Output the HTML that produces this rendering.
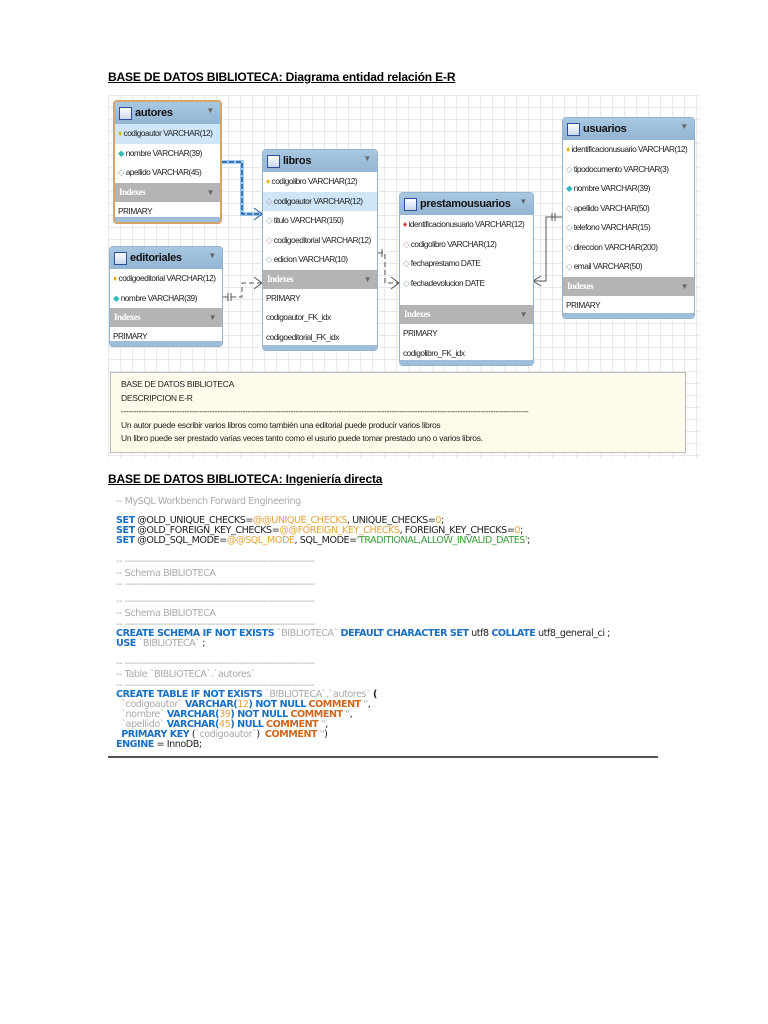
<!DOCTYPE html>
<html><head><meta charset="utf-8"><style>
*{margin:0;padding:0;box-sizing:border-box}
body{width:768px;height:1024px;background:#fff;position:relative;overflow:hidden;font-family:"Liberation Sans",sans-serif}
.h{position:absolute;left:108px;font:bold 12px "Liberation Sans",sans-serif;letter-spacing:-0.15px;text-decoration:underline;color:#000}
.grid{position:absolute;left:108px;top:95px;width:592px;height:363px;background-color:#fff;
background-image:linear-gradient(#e8e8e8 1px,transparent 1px),linear-gradient(90deg,#e8e8e8 1px,transparent 1px);background-size:12px 12px}
.t{position:absolute;background:#fff;border:1px solid #93b3cf;border-radius:4px;overflow:hidden;font-size:8.3px;color:#222;letter-spacing:-0.5px}
.t .hd{height:22px;background:linear-gradient(#a9c7e0,#93b6d4);font:bold 11px "Liberation Sans",sans-serif;letter-spacing:-0.3px;color:#111;padding:5px 0 0 20px;position:relative}
.t .hd:before{content:"";position:absolute;left:4px;top:5px;width:11px;height:11px;border:1px solid #2c4fa0;background:linear-gradient(#fff,#c9d7ee)}
.t .hd:after{content:"▼";position:absolute;right:6px;top:4px;font-size:8px;color:#666}
.r{height:19.5px;line-height:19.5px;padding-left:3px;white-space:nowrap}
.r.sel{background:#cfe6f8}
.ix{height:19px;line-height:19px;background:#b4b4b4;color:#fff;font-weight:bold;padding-left:4px;position:relative;font-family:"Liberation Serif",serif;font-size:9px}
.ix:after{content:"▼";position:absolute;right:6px;font-size:8px;color:#666}
.ft{position:absolute;left:0;right:0;bottom:0;height:5px;background:#9dbdd8}
.k{color:#e0b800}.kr{color:#c33}.d{color:#8aa}.dc{color:#3bb}.dr{color:#c99}
.note{position:absolute;left:110px;top:372px;width:576px;height:81px;background:#fffbea;border:1px solid #bbb;font-size:8.5px;letter-spacing:-0.3px;color:#222;padding:5px 0 0 10px;line-height:13.5px}
.code{position:absolute;left:108px;top:493px;width:550px;height:265px;border-bottom:2px solid #555;font:9.6px "DejaVu Sans",sans-serif;letter-spacing:-0.45px;color:#222}
.code div{position:absolute;left:8px;white-space:pre}
.c{color:#aaa}.b{color:#1a6fc0;font-weight:bold}.o{color:#e6a33a}.g{color:#3a9a3a}.br{color:#d0661c;font-weight:bold}
</style></head><body>
<div class="h" style="top:70px">BASE DE DATOS BIBLIOTECA: Diagrama entidad relación E-R</div>
<div class="grid"></div>

<svg style="position:absolute;left:0;top:0" width="768" height="470">
<path d="M222 162 H242 V214 H262" stroke="#2a8ee0" stroke-width="4" fill="none" opacity=".45"/>
<path d="M222 162 H242 V214 H262" stroke="#1a5a9a" stroke-width="1.5" fill="none" stroke-dasharray="5,2"/>
<path d="M254 208 L262 214 L254 220" stroke="#1a5a9a" fill="none"/>
<path d="M223 297 H242 V283 H262" stroke="#555" fill="none" stroke-dasharray="5,3"/>
<path d="M254 277 L262 283 L254 289 M228 293 V301 M231 293 V301" stroke="#555" fill="none"/>
<path d="M378 253 H385 V283 H399" stroke="#555" fill="none" stroke-dasharray="5,3"/>
<path d="M391 277 L399 283 L391 289 M382 249 V257" stroke="#555" fill="none"/>
<path d="M533 281 H546 V217 H562" stroke="#555" fill="none"/>
<path d="M541 276 L533 281 L541 286 M552 213 V221 M555 213 V221" stroke="#555" fill="none"/>
</svg>

<div class="t" style="left:113px;top:100px;width:109px;height:124px;border:2px solid #d4a468">
<div class="hd">autores</div>
<div class="r sel"><span class="k">♦</span> codigoautor VARCHAR(12)</div>
<div class="r"><span class="dc">◆</span> nombre VARCHAR(39)</div>
<div class="r"><span class="d">◇</span> apellido VARCHAR(45)</div>
<div class="ix">Indexes</div>
<div class="r">PRIMARY</div><div class="ft"></div></div>

<div class="t" style="left:262px;top:149px;width:116px;height:202px">
<div class="hd">libros</div>
<div class="r"><span class="k">♦</span> codigolibro VARCHAR(12)</div>
<div class="r sel"><span class="dr">◇</span> codigoautor VARCHAR(12)</div>
<div class="r"><span class="d">◇</span> titulo VARCHAR(150)</div>
<div class="r"><span class="dr">◇</span> codigoeditorial VARCHAR(12)</div>
<div class="r"><span class="d">◇</span> edicion VARCHAR(10)</div>
<div class="ix">Indexes</div>
<div class="r">PRIMARY</div><div class="r">codigoautor_FK_idx</div><div class="r">codigoeditorial_FK_idx</div><div class="ft"></div></div>

<div class="t" style="left:109px;top:246px;width:114px;height:101px">
<div class="hd">editoriales</div>
<div class="r"><span class="k">♦</span> codigoeditorial VARCHAR(12)</div>
<div class="r"><span class="dc">◆</span> nombre VARCHAR(39)</div>
<div class="ix">Indexes</div>
<div class="r">PRIMARY</div><div class="ft"></div></div>

<div class="t" style="left:399px;top:192px;width:135px;height:174px">
<div class="hd">prestamousuarios</div>
<div class="r"><span class="kr">♦</span> identificacionusuario VARCHAR(12)</div>
<div class="r"><span class="dr">◇</span> codigolibro VARCHAR(12)</div>
<div class="r"><span class="d">◇</span> fechaprestamo DATE</div>
<div class="r"><span class="d">◇</span> fechadevolucion DATE</div>
<div style="height:12px"></div>
<div class="ix">Indexes</div>
<div class="r">PRIMARY</div><div class="r">codigolibro_FK_idx</div><div class="ft"></div></div>

<div class="t" style="left:562px;top:117px;width:133px;height:202px">
<div class="hd">usuarios</div>
<div class="r"><span class="k">♦</span> identificacionusuario VARCHAR(12)</div>
<div class="r"><span class="d">◇</span> tipodocumento VARCHAR(3)</div>
<div class="r"><span class="dc">◆</span> nombre VARCHAR(39)</div>
<div class="r"><span class="d">◇</span> apellido VARCHAR(50)</div>
<div class="r"><span class="d">◇</span> telefono VARCHAR(15)</div>
<div class="r"><span class="d">◇</span> direccion VARCHAR(200)</div>
<div class="r"><span class="d">◇</span> email VARCHAR(50)</div>
<div class="ix">Indexes</div>
<div class="r">PRIMARY</div><div class="ft"></div></div>

<div class="note">BASE DE DATOS BIBLIOTECA<br>DESCRIPCION E-R<br>-----------------------------------------------------------------------------------------------------------------------------------------------------------------<br>Un autor puede escribir varios libros como también una editorial puede producir varios libros<br>Un libro puede ser prestado varias veces tanto como el usurio puede tomar prestado uno o varios libros.</div>

<div class="h" style="top:472px">BASE DE DATOS BIBLIOTECA: Ingeniería directa</div>

<div class="code">
<div class="c" style="top:3px">-- MySQL Workbench Forward Engineering</div>
<div style="top:22px"><span class="b">SET</span> @OLD_UNIQUE_CHECKS=<span class="o">@@UNIQUE_CHECKS</span>, UNIQUE_CHECKS=<span class="o">0</span>;</div>
<div style="top:32px"><span class="b">SET</span> @OLD_FOREIGN_KEY_CHECKS=<span class="o">@@FOREIGN_KEY_CHECKS</span>, FOREIGN_KEY_CHECKS=<span class="o">0</span>;</div>
<div style="top:42px"><span class="b">SET</span> @OLD_SQL_MODE=<span class="o">@@SQL_MODE</span>, SQL_MODE=<span class="g">'TRADITIONAL,ALLOW_INVALID_DATES'</span>;</div>
<div class="c" style="top:63px">-- ---------------------------------------------------------------</div>
<div class="c" style="top:75px">-- Schema BIBLIOTECA</div>
<div class="c" style="top:86px">-- ---------------------------------------------------------------</div>
<div class="c" style="top:103px">-- ---------------------------------------------------------------</div>
<div class="c" style="top:115px">-- Schema BIBLIOTECA</div>
<div class="c" style="top:126px">-- ---------------------------------------------------------------</div>
<div style="top:135px"><span class="b">CREATE SCHEMA IF NOT EXISTS</span> <span class="c">`BIBLIOTECA`</span> <span class="b">DEFAULT CHARACTER SET</span> utf8 <span class="b">COLLATE</span> utf8_general_ci ;</div>
<div style="top:145px"><span class="b">USE</span> <span class="c">`BIBLIOTECA`</span> ;</div>
<div class="c" style="top:165px">-- ---------------------------------------------------------------</div>
<div class="c" style="top:176px">-- Table `BIBLIOTECA`.`autores`</div>
<div class="c" style="top:187px">-- ---------------------------------------------------------------</div>
<div style="top:196px"><span class="b">CREATE TABLE IF NOT EXISTS</span> <span class="c">`BIBLIOTECA`.`autores`</span> <b>(</b></div>
<div style="top:206px">  <span class="c">`codigoautor`</span> <span class="b">VARCHAR(</span><span class="o">12</span><span class="b">) NOT NULL</span> <span class="br">COMMENT</span> <span class="c">''</span>,</div>
<div style="top:216px">  <span class="c">`nombre`</span> <span class="b">VARCHAR(</span><span class="o">39</span><span class="b">) NOT NULL</span> <span class="br">COMMENT</span> <span class="c">''</span>,</div>
<div style="top:226px">  <span class="c">`apellido`</span> <span class="b">VARCHAR(</span><span class="o">45</span><span class="b">) NULL</span> <span class="br">COMMENT</span> <span class="c">''</span>,</div>
<div style="top:236px">  <span class="b">PRIMARY KEY</span> (<span class="c">`codigoautor`</span>)  <span class="br">COMMENT</span> <span class="c">''</span>)</div>
<div style="top:246px"><span class="b">ENGINE</span> = InnoDB;</div>
</div>
</body></html>
